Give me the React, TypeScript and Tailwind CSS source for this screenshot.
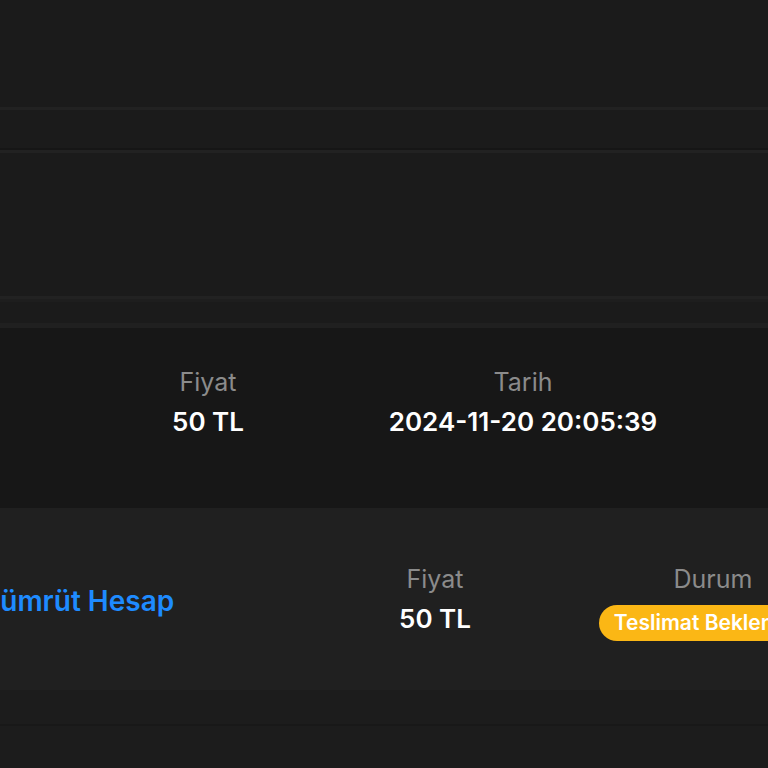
import React from 'react';

const font = { fontFamily: 'Inter, "Noto Sans", sans-serif' };

const Stat: React.FC<{ label: string; value: string; className?: string }> = ({ label, value, className }) => (
  <div className={`flex flex-col items-center shrink-0 ${className ?? ''}`}>
    <div className="text-[25px] leading-[30px] text-[#8b8b8b]">{label}</div>
    <div className="mt-[8px] text-[26px] leading-[34px] font-semibold text-white whitespace-nowrap">{value}</div>
  </div>
);

export default function App() {
  return (
    <div className="w-[768px] h-[768px] overflow-hidden bg-[#1b1b1b] flex flex-col" style={font}>
      <div className="h-[107px] shrink-0" />
      <div className="h-[3px] shrink-0 bg-[#222222]" />
      <div className="h-[38px] shrink-0" />
      <div className="h-[2px] shrink-0 bg-[#161616]" />
      <div className="h-[3px] shrink-0 bg-[#222222]" />
      <div className="h-[143px] shrink-0" />
      <div className="h-[3px] shrink-0 bg-[#222222]" />
      <div className="h-[3px] shrink-0 bg-[#1e1e1e]" />
      <div className="h-[21px] shrink-0" />
      <div className="h-[5px] shrink-0 bg-[#202020]" />

      {/* order card */}
      <div className="h-[180px] shrink-0 bg-[#171717] flex items-start pt-[39px] pl-[108px]">
        <Stat label="Fiyat" value="50 TL" className="w-[200px]" />
        <Stat label="Tarih" value="2024-11-20 20:05:39" className="w-[300px] ml-[65px]" />
      </div>

      {/* product card */}
      <div className="h-[182px] shrink-0 bg-[#202020] flex items-start">
        <div className="w-[353px] shrink-0 pt-[76px] -ml-[18px] text-[28px] leading-[34px] font-semibold text-[#1e8bff] whitespace-nowrap">
          Zümrüt Hesap
        </div>
        <div className="pt-[56px]">
          <Stat label="Fiyat" value="50 TL" className="w-[200px]" />
        </div>
        <div className="pt-[56px] flex flex-col items-center shrink-0 w-[260px] ml-[48px]">
          <div className="text-[25px] leading-[30px] text-[#8b8b8b]">Durum</div>
          <div className="mt-[11px] h-[36px] px-[15px] rounded-full bg-[#fbb715] flex items-center text-[21px] font-semibold text-white whitespace-nowrap">
            Teslimat Bekleniyor
          </div>
        </div>
      </div>

      <div className="h-[34px] shrink-0 bg-[#1c1c1c]" />
      <div className="h-[2px] shrink-0 bg-[#181818]" />
      <div className="flex-1 bg-[#1c1c1c]" />
    </div>
  );
}
